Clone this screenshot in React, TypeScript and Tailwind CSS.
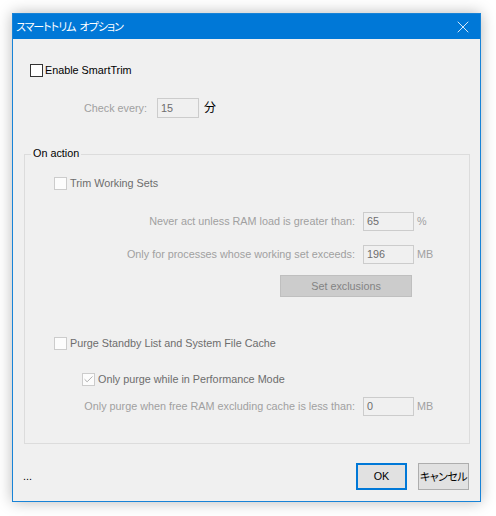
import { X, Check } from 'lucide-react';

const font = { fontFamily: '"Liberation Sans", "Noto Sans CJK JP", sans-serif' };

const Box = ({ checked = false, disabled = false }: { checked?: boolean; disabled?: boolean }) => (
  <span
    className={`flex h-[13px] w-[13px] shrink-0 items-center justify-center border ${
      disabled ? 'border-[#cccccc] bg-[#fcfcfc]' : 'border-[#333333] bg-white'
    }`}
  >
    {checked && <Check className="h-[11px] w-[11px] text-[#a6a6a6]" strokeWidth={2} />}
  </span>
);

const NumRow = ({ label, value, unit, mt }: { label: string; value: string; unit: string; mt: string }) => (
  <div className={`flex items-center ${mt}`}>
    <div className="w-[330px] text-right text-[#a0a0a0]">{label}</div>
    <div className="ml-[8px] flex h-[19px] w-[51px] items-center border border-[#cccccc] pl-[3px] text-[#6d6d6d]">
      {value}
    </div>
    <span className="ml-[3px] text-[#a0a0a0]">{unit}</span>
  </div>
);

export default function App() {
  return (
    <div className="h-[516px] w-[496px] bg-white pl-[12px] pt-[13px] text-[10.8px] leading-none" style={font}>
      <div className="flex h-[489px] w-[469px] flex-col border border-[#1883d7] bg-[#f0f0f0] shadow-[0_0_14px_rgba(0,0,0,0.28)]">
        {/* title bar */}
        <div className="flex h-[25px] shrink-0 items-center justify-between bg-[#0078d7] pl-[3px] pr-[7px] text-white">
          <span className='font-["Noto_Sans_CJK_JP"] text-[11px] tracking-[-1px] [font-feature-settings:"palt"]'>
            スマートトリム<span className="ml-[4px]">オプション</span>
          </span>
          <X className="h-[20px] w-[20px]" strokeWidth={1} />
        </div>

        {/* Enable */}
        <div className="ml-[17px] mt-[25px] flex items-center gap-[2px]">
          <Box />
          <span className="text-black">Enable SmartTrim</span>
        </div>

        {/* Check every */}
        <div className="mt-[21px] flex items-center">
          <div className="w-[134px] text-right text-[#a0a0a0]">Check every:</div>
          <div className="ml-[10px] flex h-[20px] w-[42px] items-center border border-[#cccccc] pl-[3px] text-[#6d6d6d]">
            15
          </div>
          <span className="ml-[5px] text-[12px] text-black">分</span>
        </div>

        {/* group box */}
        <div className="relative ml-[11px] mt-[36px] h-[290px] w-[446px] border border-[#dcdcdc]">
          <span className="absolute -top-[7px] left-[6px] bg-[#f0f0f0] px-[2px] text-black">On action</span>

          <div className="ml-[29px] mt-[22px] flex items-center gap-[3px]">
            <Box disabled />
            <span className="text-[#6d6d6d]">Trim Working Sets</span>
          </div>

          <NumRow label="Never act unless RAM load is greater than:" value="65" unit="%" mt="mt-[22px]" />
          <NumRow label="Only for processes whose working set exceeds:" value="196" unit="MB" mt="mt-[14px]" />

          <div className="ml-[255px] mt-[11px] flex h-[22px] w-[132px] items-center justify-center border border-[#bfbfbf] bg-[#cccccc] text-[#838383]">
            Set exclusions
          </div>

          <div className="ml-[29px] mt-[40px] flex items-center gap-[3px]">
            <Box disabled />
            <span className="text-[#6d6d6d]">Purge Standby List and System File Cache</span>
          </div>

          <div className="ml-[57px] mt-[23px] flex items-center gap-[3px]">
            <Box disabled checked />
            <span className="text-[#6d6d6d]">Only purge while in Performance Mode</span>
          </div>

          <NumRow
            label="Only purge when free RAM excluding cache is less than:"
            value="0"
            unit="MB"
            mt="mt-[11px]"
          />
        </div>

        {/* footer */}
        <div className="mt-[19px] flex items-center">
          <span className="ml-[10px] text-black">...</span>
          <div className="ml-auto mr-[11px] flex gap-[11px]">
            <div className="flex h-[27px] w-[51px] items-center justify-center border-2 border-[#0078d7] bg-[#e1e1e1] text-black">
              OK
            </div>
            <div className='flex h-[27px] w-[51px] items-center justify-center whitespace-nowrap border border-[#adadad] bg-[#e1e1e1] font-["Noto_Sans_CJK_JP"] text-[11px] tracking-[-0.5px] text-black [font-feature-settings:"palt"]'>
              キャンセル
            </div>
          </div>
        </div>
      </div>
    </div>
  );
}
